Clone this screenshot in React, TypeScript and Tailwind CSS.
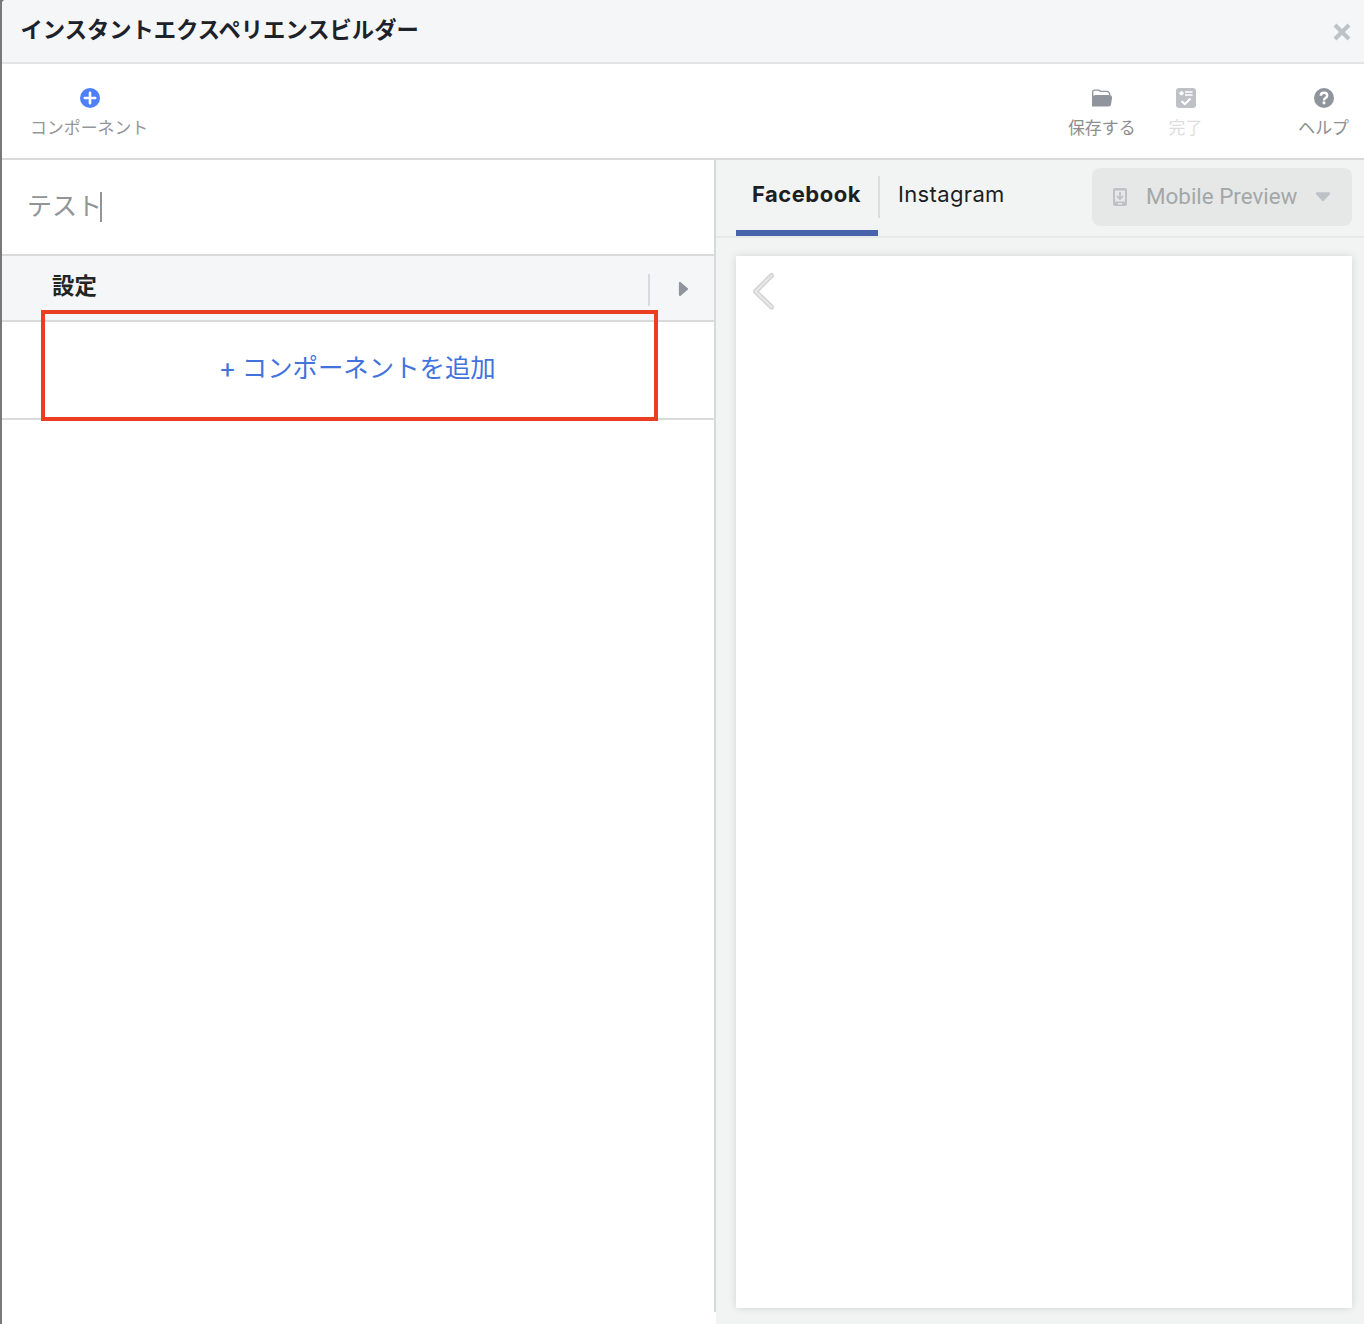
import type { ReactNode } from "react";

function ToolItem({ label, className, children }: { label: string; className: string; children: ReactNode }) {
  return (
    <button className={`flex flex-col items-center whitespace-nowrap text-[16.9px] leading-[26px] ${className}`}>
      <span className="mb-1 flex h-6 w-6 items-center justify-center">{children}</span>
      {label}
    </button>
  );
}

function Header() {
  return (
    <header className="flex h-16 shrink-0 justify-between border-b-2 border-[#e3e4e6] bg-[#f5f6f8] pl-[18.5px] pr-[13px]">
      <h1 className="pt-[12px] text-[22.3px] font-bold leading-8 text-[#1d2129]">インスタントエクスペリエンスビルダー</h1>
      <svg className="mt-[23px]" width="18" height="18" viewBox="0 0 18 18" stroke="#bec2c9" strokeWidth="4.2">
        <path d="M2 2L16 16M16 2L2 16" />
      </svg>
    </header>
  );
}

function Toolbar() {
  return (
    <div className="flex h-24 shrink-0 border-b-2 border-[#dadada] pt-[22px]">
      <ToolItem label="コンポーネント" className="ml-[28px] text-[#949699]">
        <svg className="ml-[2px] shrink-0" width="20" height="20" viewBox="0 0 20 20">
          <circle cx="10" cy="10" r="10" fill="#4e80f7" />
          <path d="M10 4.8V15.2M4.8 10H15.2" stroke="#fff" strokeWidth="2.6" strokeLinecap="round" />
        </svg>
      </ToolItem>
      <ToolItem label="保存する" className="ml-auto text-[#8c8e91]">
        <svg width="20" height="20" viewBox="0 0 20 20" fill="#90949c">
          <path d="M0.7 10V4Q0.7 2.1 2.6 2.1H6.8L8.6 3.4H14.5Q17.6 3.4 17.8 7" fill="none" stroke="#90949c" strokeWidth="1.4" />
          <path d="M0 18.5V10.5Q1 7 3.5 7H17.5Q20.4 7 20 10L19 16.5Q18.6 18.5 16.5 18.5Z" />
        </svg>
      </ToolItem>
      <ToolItem label="完了" className="ml-[33px] text-[#dcdddf]">
        <svg className="ml-[2px] shrink-0" width="20" height="20" viewBox="0 0 20 20">
          <rect width="20" height="20" rx="3" fill="#bec2c7" />
          <circle cx="5.5" cy="5.3" r="2.1" fill="#fff" />
          <path d="M9 4H16.5M9 7H16.5" stroke="#fff" strokeWidth="1.4" />
          <path d="M5.5 13L8.8 16.2L14.5 10.5" fill="none" stroke="#fff" strokeWidth="2" />
        </svg>
      </ToolItem>
      <ToolItem label="ヘルプ" className="ml-[96px] mr-[15px] text-[#8c8e91]">
        <svg width="20" height="20" viewBox="0 0 20 20">
          <circle cx="10" cy="10" r="10" fill="#90949c" />
          <path d="M6.8 7.8Q6.8 4.8 10 4.8T13.2 7.6Q13.2 9.2 11.6 9.9Q10 10.6 10 12.4" fill="none" stroke="#fff" strokeWidth="2.4" />
          <rect x="8.7" y="13.6" width="2.6" height="2.6" rx="0.6" fill="#fff" />
        </svg>
      </ToolItem>
    </div>
  );
}

function Editor() {
  return (
    <section className="h-[1152px] w-[714px] shrink-0 border-r-2 border-[#d8d9da]">
      <div className="flex h-24 items-center border-b-2 border-[#dadada] pl-[25px] text-[25px] text-[#929497]">
        <span className="pb-[4px]">テスト</span>
        <span className="-ml-[2px] h-[30px] w-[2px] bg-[#929497]" />
      </div>
      <div className="flex h-[66px] border-b-2 border-[#dadada] bg-[#f5f6f8] pl-[50px]">
        <h2 className="pt-[12px] text-[22.4px] font-bold leading-8 text-[#222426]">設定</h2>
        <div className="ml-auto mt-[18px] h-8 w-[2px] bg-[#d8dadd]" />
        <svg className="ml-[28px] mr-[25px] mt-[25px]" width="11" height="16" viewBox="0 0 11 16">
          <path d="M2 2V14L9 8Z" fill="#90949c" stroke="#90949c" strokeWidth="2.2" strokeLinejoin="round" />
        </svg>
      </div>
      <div className="relative h-[98px] border-b-2 border-[#dadada]">
        <button className="flex h-24 w-full items-center justify-center pb-[7px] text-[25.4px] text-[#4273dc]">
          <span className="mr-[7px] pt-[3px] font-medium">+</span>コンポーネントを追加
        </button>
        <div className="absolute -top-[12px] left-[39px] h-[111px] w-[617px] border-4 border-[#ea3e23]" />
      </div>
    </section>
  );
}

function Preview() {
  return (
    <section className="flex-1 bg-[#f2f4f4]">
      <div className="flex h-[78px] border-b-2 border-[#e8eaea] pl-5 pr-3 font-['Inter'] text-[22px]">
        <button className="h-[76px] w-[142px] border-b-6 border-[#4862ab] pb-[2px] pr-[1px] font-bold tracking-[0.5px] text-[#1c1e21]">Facebook</button>
        <div className="mt-4 h-[42px] w-[2px] bg-[#dadde1]" />
        <button className="ml-[18px] h-[68px] tracking-[0.35px] text-[#1c1e21]">Instagram</button>
        <button className="ml-auto mt-2 flex h-[58px] w-[260px] items-center rounded-lg bg-[#e6e8e8] pl-[21px] font-['Roboto'] text-[22.4px] text-[#a4a7a7]">
          <svg width="14" height="18" viewBox="0 0 14 18">
            <rect width="14" height="18" rx="2" fill="#bec2c8" />
            <rect x="2" y="2.5" width="10" height="11" fill="#e6e8e8" />
            <path d="M7 4V10.5M4 8L7 11L10 8" fill="none" stroke="#bec2c8" strokeWidth="1.8" />
            <rect x="5" y="15" width="4" height="1.4" fill="#e6e8e8" />
          </svg>
          <span className="ml-[19px] w-[151px] whitespace-nowrap">Mobile Preview</span>
          <svg className="ml-[18px]" width="16" height="10" viewBox="0 0 16 10">
            <path d="M2 1.5H14L8 8Z" fill="#bec2c8" stroke="#bec2c8" strokeWidth="2.4" strokeLinejoin="round" />
          </svg>
        </button>
      </div>
      <div className="ml-5 mr-3 mt-[18px] h-[1052px] bg-white shadow-[0_0_8px_rgba(0,0,0,0.13)]">
        <svg className="block translate-x-4 translate-y-4" width="24" height="40" viewBox="0 0 24 40" fill="none" strokeLinecap="round" strokeLinejoin="round">
          <path d="M19.5 3.5L3.5 19.5L19.5 35" stroke="#d2d2d2" strokeWidth="5" />
          <path d="M19.5 3.5L3.5 19.5L19.5 35" stroke="#e6e6e6" strokeWidth="2.4" />
        </svg>
      </div>
    </section>
  );
}

export default function App() {
  return (
    <div className="flex h-[1324px] w-[1364px] overflow-hidden bg-[#77797b]">
      <div className="ml-[2px] flex flex-1 flex-col overflow-hidden rounded-tl bg-white font-['Noto_Sans_CJK_JP',sans-serif]">
        <Header />
        <Toolbar />
        <main className="flex flex-1">
          <Editor />
          <Preview />
        </main>
      </div>
    </div>
  );
}
